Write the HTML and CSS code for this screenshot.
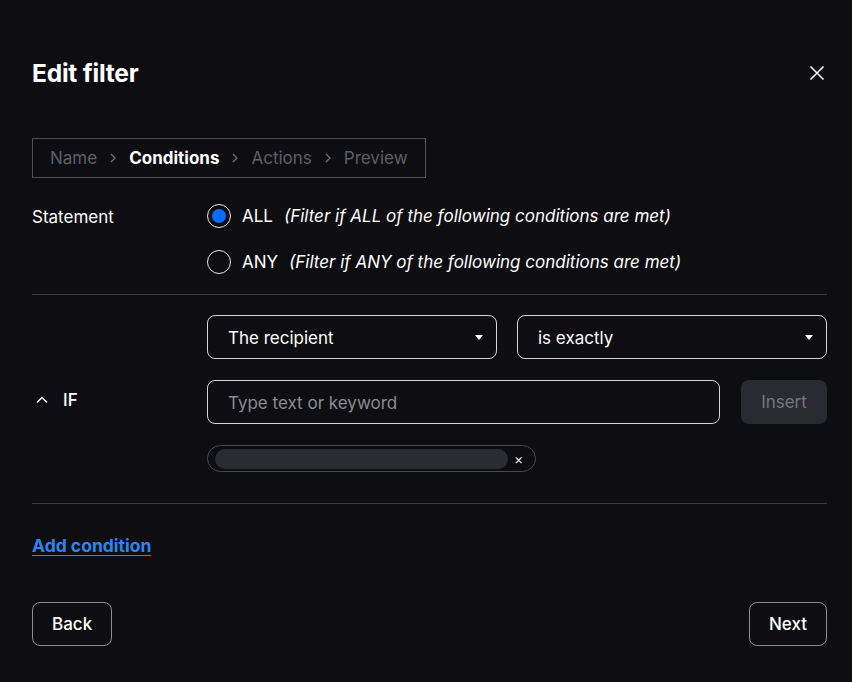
FILE: index.html
```html
<!DOCTYPE html>
<html lang="en">
<head>
<meta charset="utf-8">
<title>Edit filter</title>
<link rel="stylesheet" href="styles.css">
</head>
<body>
<div class="modal">
  <header class="head">
    <h1 class="title">Edit filter</h1>
    <button class="close" aria-label="Close">
      <svg width="16" height="16" viewBox="0 0 16 16"><path d="M1.5 1.5 L14.5 14.5 M14.5 1.5 L1.5 14.5" stroke="#fff" stroke-width="1.6" fill="none"/></svg>
    </button>
  </header>

  <nav class="crumbs">
    <span class="crumb">Name</span>
    <svg class="sep" width="8" height="12" viewBox="0 0 8 12"><path d="M2 2 L6 6 L2 10" stroke="#6c6c72" stroke-width="1.3" fill="none"/></svg>
    <span class="crumb active">Conditions</span>
    <svg class="sep" width="8" height="12" viewBox="0 0 8 12"><path d="M2 2 L6 6 L2 10" stroke="#6c6c72" stroke-width="1.3" fill="none"/></svg>
    <span class="crumb">Actions</span>
    <svg class="sep" width="8" height="12" viewBox="0 0 8 12"><path d="M2 2 L6 6 L2 10" stroke="#6c6c72" stroke-width="1.3" fill="none"/></svg>
    <span class="crumb">Preview</span>
  </nav>

  <section class="statement">
    <div class="label">Statement</div>
    <div class="options">
      <label class="opt">
        <span class="radio checked"><span class="dot"></span></span>
        <span class="opt-name">ALL</span>
        <span class="opt-desc">(Filter if ALL of the following conditions are met)</span>
      </label>
      <label class="opt">
        <span class="radio"></span>
        <span class="opt-name">ANY</span>
        <span class="opt-desc">(Filter if ANY of the following conditions are met)</span>
      </label>
    </div>
  </section>

  <section class="cond">
    <div class="if">
      <svg width="14" height="10" viewBox="0 0 14 10"><path d="M2 7.5 L7 2.5 L12 7.5" stroke="#fff" stroke-width="1.4" fill="none"/></svg>
      <span>IF</span>
    </div>
    <div class="cond-body">
      <div class="selects">
        <div class="select s1"><span>The recipient</span><span class="caret"></span></div>
        <div class="select s2"><span>is exactly</span><span class="caret"></span></div>
      </div>
      <div class="input-row">
        <div class="input">Type text or keyword</div>
        <button class="insert">Insert</button>
      </div>
      <div class="chips">
        <div class="chip"><span class="chip-val"></span><span class="chip-x">×</span></div>
      </div>
    </div>
  </section>

  <a class="add" href="#">Add condition</a>

  <footer class="foot">
    <button class="btn">Back</button>
    <button class="btn">Next</button>
  </footer>
</div>
</body>
</html>
```

FILE: styles.css
```css
* { box-sizing: border-box; }
html, body {
  margin: 0;
  background: #0e0e12;
  color: #fff;
  font-family: Inter, "Noto Sans", "Liberation Sans", sans-serif;
}
.modal {
  padding: 59px 25px 0 32px;
  width: 852px;
  height: 682px;
}
.head {
  display: flex;
  align-items: center;
  justify-content: space-between;
  height: 28px;
}
.title {
  margin: 0;
  font-size: 24.5px;
  line-height: 28px;
  font-weight: 700;
  letter-spacing: -0.2px;
}
.close {
  background: none;
  border: 0;
  padding: 0;
  width: 16px;
  height: 16px;
  margin-right: 2px;
  display: flex;
}
.crumbs {
  margin-top: 51px;
  display: inline-flex;
  align-items: center;
  gap: 12px;
  height: 40px;
  padding: 0 17px;
  border: 1px solid #4f4f55;
  font-size: 17px;
}
.crumb { color: #5f5f65; }
.crumb.active { color: #fff; font-weight: 700; }
.sep { display: block; }

.statement {
  display: flex;
  margin-top: 26px;
  padding-bottom: 20px;
  border-bottom: 1px solid #3a3a40;
}
.label {
  width: 175px;
  font-size: 17px;
  line-height: 24px;
  padding-top: 1px;
}
.options {
  display: flex;
  flex-direction: column;
  gap: 22px;
}
.opt {
  display: flex;
  align-items: center;
  height: 24px;
  font-size: 17px;
}
.radio {
  width: 24px;
  height: 24px;
  border-radius: 50%;
  border: 1.5px solid #e8e8ea;
  display: flex;
  align-items: center;
  justify-content: center;
  margin-right: 11px;
}
.dot {
  width: 14px;
  height: 14px;
  border-radius: 50%;
  background: #0a6cff;
}
.opt-name { margin-right: 11px; }
.opt-desc { font-style: italic; }

.cond {
  display: flex;
  padding: 20px 0 31px;
  border-bottom: 1px solid #3a3a40;
}
.if {
  width: 175px;
  display: flex;
  align-items: center;
  gap: 14px;
  padding-left: 3px;
  padding-top: 13px;
  font-size: 17px;
  font-weight: 500;
}
.cond-body {
  flex: 1;
  display: flex;
  flex-direction: column;
  gap: 21px;
}
.selects { display: flex; gap: 20px; }
.select {
  height: 44px;
  border: 1px solid #d6d6da;
  border-radius: 8px;
  display: flex;
  align-items: center;
  justify-content: space-between;
  padding: 1px 13px 0 20px;
  font-size: 17px;
}
.s1 { width: 290px; }
.s2 { flex: 1; }
.caret {
  width: 0;
  height: 0;
  border-left: 4.5px solid transparent;
  border-right: 4.5px solid transparent;
  border-top: 5px solid #fff;
}
.input-row { display: flex; gap: 21px; }
.input {
  flex: 1;
  height: 44px;
  border: 1px solid #d6d6da;
  border-radius: 8px;
  display: flex;
  align-items: center;
  padding: 1px 20px 0;
  font-size: 17px;
  color: #8b8b90;
}
.insert {
  width: 86px;
  height: 44px;
  border: 0;
  border-radius: 8px;
  background: #2a2b32;
  color: #75767c;
  font-family: inherit;
  font-size: 17px;
}
.chips { display: flex; }
.chip {
  width: 329px;
  height: 27px;
  border: 1px solid #4a4a50;
  border-radius: 14px;
  display: flex;
  align-items: center;
  padding: 0 10px 0 7px;
}
.chip-val {
  width: 293px;
  height: 20px;
  border-radius: 10px;
  background: #2b2c32;
}
.chip-x {
  margin-left: 6px;
  font-size: 14px;
  color: #e6e6e8;
  line-height: 1;
}
.add {
  display: inline-block;
  margin-top: 32px;
  color: #2e86ea;
  font-size: 17.5px;
  line-height: 20px;
  font-weight: 700;
  text-decoration: underline;
  text-underline-offset: 3px;
}
.foot {
  margin-top: 46px;
  display: flex;
  justify-content: space-between;
}
.btn {
  height: 44px;
  padding: 0 19px;
  border: 1px solid #8a8a90;
  border-radius: 8px;
  background: transparent;
  color: #fff;
  font-family: inherit;
  font-size: 17px;
  font-weight: 500;
}
```
